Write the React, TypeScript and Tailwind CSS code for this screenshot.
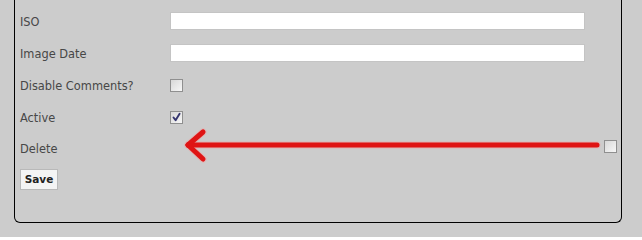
function Box({ checked }: { checked?: boolean }) {
    return (
        <span className="flex h-[13px] w-[13px] items-center justify-center border border-[#8f8f8f] bg-gradient-to-br from-[#d8d8d8] to-[#f7f7f7]">
            {checked && (
                <svg viewBox="0 0 11 11" className="h-[11px] w-[11px]">
                    <path d="M2.5 5.5 L4.6 8.2 L8.6 1.8" fill="none" stroke="#35356f" strokeWidth="1.9" strokeLinecap="round" strokeLinejoin="round" />
                </svg>
            )}
        </span>
    );
}

function TextField() {
    return <div className="h-[18px] w-[415px] border border-[#c4c4c4] bg-white" />;
}

export default function App() {
    const rows: { label: string; control: React.ReactNode }[] = [
        { label: 'ISO', control: <TextField /> },
        { label: 'Image Date', control: <TextField /> },
        { label: 'Disable Comments?', control: <Box /> },
        { label: 'Active', control: <Box checked /> },
    ];

    return (
        <div className="h-[237px] w-[642px] overflow-hidden bg-[#cccccc] font-['DejaVu_Sans',sans-serif] text-[11.4px] text-[#474747]">
            <div className="relative ml-[14px] h-[223px] w-[608px] rounded-b-[6px] border-x border-b border-black pt-[5px] pl-[5px]">
                {rows.map((row) => (
                    <div key={row.label} className="flex h-[32px] items-center">
                        <div className="w-[150px] pt-[3px]">{row.label}</div>
                        {row.control}
                    </div>
                ))}

                {/* Delete row, checkbox pushed to the right */}
                <div className="flex h-[30px] items-center pr-[4px]">
                    <div className="w-[150px] pt-[4px]">Delete</div>
                    <div className="ml-auto -mt-[4px]">
                        <Box />
                    </div>
                </div>

                <button
                    type="button"
                    className="mt-[6px] h-[21px] w-[38px] border border-[#b9b9b9] bg-[#f4f4f4] text-[10.5px] font-bold text-[#222]"
                >
                    Save
                </button>

                {/* red annotation arrow */}
                <svg className="absolute left-[168px] top-[128px] h-[36px] w-[420px]" viewBox="0 0 420 36">
                    <g fill="none" strokeLinecap="round" strokeLinejoin="round">
                        <g stroke="#f3a0a0" strokeWidth="7" opacity="0.5">
                            <path d="M5 17 L414 17" />
                            <path d="M5 17 L20 4" />
                            <path d="M5 17 L20 31" />
                        </g>
                        <g stroke="#df1414" strokeWidth="5">
                            <path d="M5 17 L414 17" />
                            <path d="M5 17 L20 4" />
                            <path d="M5 17 L20 31" />
                        </g>
                    </g>
                </svg>
            </div>
        </div>
    );
}
